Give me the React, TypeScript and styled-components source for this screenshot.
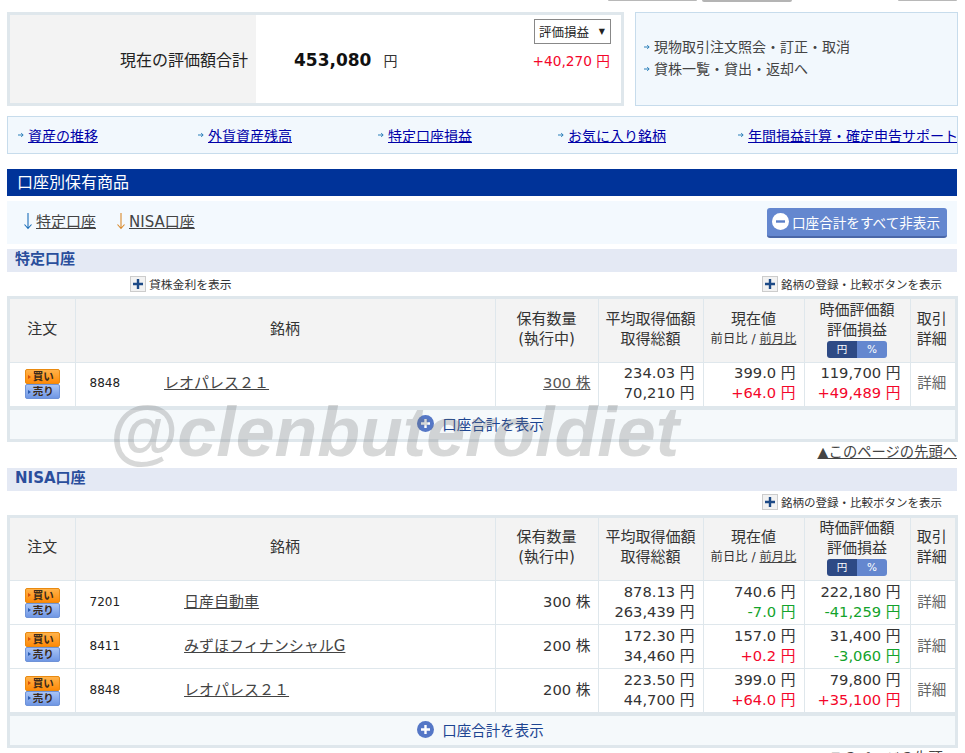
import React from 'react'
import styled, { createGlobalStyle } from 'styled-components'

const GlobalStyle = createGlobalStyle`
  html, body {
    margin: 0;
    padding: 0;
    background: #fff;
    overflow: hidden;
  }
  body {
    font-family: "DejaVu Sans", "Noto Sans CJK JP", sans-serif;
    color: #333;
  }
`

const Page = styled.div`
  position: relative;
  width: 965px;
  height: 753px;
  overflow: hidden;
  padding: 12px 7px 0;
  box-sizing: border-box;
`

const TopTabs = styled.div`
  position: absolute;
  top: 0;
  left: 0;
  width: 100%;
  height: 2px;
`

const TopTab = styled.span<{ $left: number; $width: number; $dark?: boolean }>`
  position: absolute;
  top: 0;
  left: ${p => p.$left}px;
  width: ${p => p.$width}px;
  height: ${p => (p.$dark ? 2 : 1)}px;
  border-radius: 0 0 2px 2px;
  background: ${p => (p.$dark ? '#b4b4b4' : '#b8b8b8')};
`

const Summary = styled.div`
  display: flex;
  gap: 11px;
  height: 94px;
`

const SummaryBox = styled.div`
  width: 617px;
  border: 3px solid #dfe7ec;
  box-sizing: border-box;
  display: flex;
`

const SummaryLabel = styled.div`
  width: 246px;
  background: #f3f3f3;
  display: flex;
  align-items: center;
  justify-content: flex-end;
  font-size: 16px;
  color: #222;
  box-sizing: border-box;
  padding-right: 8px;
`

const SummaryValue = styled.div`
  width: 146px;
  display: flex;
  align-items: center;
  padding-left: 38px;
  padding-top: 1px;
  font-size: 17px;
  font-weight: bold;
  color: #111;
`

const Yen = styled.span`
  font-size: 14px;
  font-weight: normal;
  margin-left: 12px;
  color: #333;
`

const SummarySide = styled.div`
  flex: 1;
  display: flex;
  flex-direction: column;
  align-items: flex-end;
  padding: 4px 10px 0 0;
`

const Select = styled.div`
  width: 77px;
  height: 25px;
  border: 1px solid #888;
  box-sizing: border-box;
  display: flex;
  align-items: center;
  justify-content: space-between;
  padding: 0 5px 0 4px;
  font-size: 12.5px;
  color: #222;
`

const Caret = styled.span`
  font-size: 8px;
  color: #222;
`

const Gain = styled.div`
  margin-top: 6px;
  margin-right: 1px;
  font-size: 13.7px;
  color: #f4062a;
`

const SideLinks = styled.div`
  flex: 1;
  border: 1px solid #c7dcec;
  background: #f2f8fd;
  display: flex;
  flex-direction: column;
  justify-content: center;
  gap: 3px;
  padding: 0 0 2px 8px;
  font-size: 14px;
  line-height: 19px;
  color: #444;
`

const LinkLine = styled.div`
  display: flex;
  align-items: center;
`

const ArrowIcon = styled.svg`
  flex: none;
  width: 6px;
  height: 6px;
  margin-right: 4px;
`

const LinkBar = styled.div`
  margin-top: 10px;
  height: 38px;
  width: 951px;
  border: 1px solid #c7dcec;
  background: #f2f8fd;
  box-sizing: border-box;
  display: flex;
  align-items: center;
  padding-left: 10px;
  overflow: hidden;
  white-space: nowrap;
  font-size: 14px;
`

const BarItem = styled.div`
  flex: 0 0 180px;
  display: flex;
  align-items: center;
`

const BarLink = styled.a`
  color: #0000a8;
  text-decoration: underline;
`

const SectionTitle = styled.div`
  margin-top: 15px;
  height: 27px;
  width: 950px;
  background: #003399;
  color: #fff;
  font-size: 16px;
  line-height: 27px;
  padding-left: 10px;
  box-sizing: border-box;
`

const AnchorRow = styled.div`
  margin-top: 5px;
  height: 43px;
  width: 950px;
  background: #f3f9fe;
  display: flex;
  align-items: center;
  justify-content: space-between;
  padding: 0 10px 0 16px;
  box-sizing: border-box;
  font-size: 15px;
`

const Anchors = styled.div`
  display: flex;
  gap: 20px;
  margin-bottom: 4px;
`

const Anchor = styled.a`
  color: #444;
  display: flex;
  align-items: center;
  text-decoration: underline;
`

const DownArrow = styled.svg`
  width: 10px;
  height: 18px;
  margin-right: 3px;
`

const CollapseButton = styled.div`
  width: 180px;
  height: 30px;
  border-radius: 3px;
  background: #6487cf;
  border-bottom: 2px solid #4a67a8;
  box-sizing: border-box;
  color: #fff;
  font-size: 13.6px;
  display: flex;
  align-items: center;
  padding-left: 5px;
  gap: 3px;
`

const AccountTitle = styled.div<{ $top: number }>`
  margin-top: ${p => p.$top}px;
  height: 23px;
  width: 950px;
  background: #e4e9f4;
  color: #2a4e9c;
  font-size: 15px;
  font-weight: bold;
  line-height: 21px;
  padding-left: 8px;
  box-sizing: border-box;
`

const OptionRow = styled.div`
  height: 24px;
  width: 950px;
  display: flex;
  align-items: center;
  justify-content: flex-end;
  padding: 0 15px 1px 123px;
  box-sizing: border-box;
  font-size: 11.5px;
  color: #333;
`

const Option = styled.div<{ $push?: boolean }>`
  display: flex;
  align-items: center;
  gap: 3px;
  margin-right: ${p => (p.$push ? 'auto' : '0')};
  font-size: ${p => (p.$push ? '11.8px' : '11.5px')};
`

const PlusBox = styled.svg`
  width: 16px;
  height: 16px;
`

const TableWrap = styled.div`
  width: 951px;
  border: 3px solid #dfe7ec;
  box-sizing: border-box;
`

const Table = styled.table`
  width: 945px;
  table-layout: fixed;
  border-collapse: collapse;
`

const Th = styled.th<{ $w: number }>`
  box-sizing: border-box;
  width: ${p => p.$w}px;
  height: 63px;
  padding: 0 0 3px;
  background: #f3f3f3;
  border: 1px solid #dfe7ec;
  border-top: 0;
  font-size: 15px;
  font-weight: normal;
  line-height: 20px;
  color: #333;
  text-align: center;
  vertical-align: middle;
  &:first-child { border-left: 0; }
  &:last-child { border-right: 0; padding-right: 2px; }
`

const HeaderSmall = styled.div`
  font-size: 12.3px;
  line-height: 20px;
`

const PlainLink = styled.a`
  color: #444;
  text-decoration: underline;
`

const Toggle = styled.div`
  display: flex;
  width: 60px;
  height: 17px;
  margin: 1px auto 0;
  border-radius: 3px;
  overflow: hidden;
  font-size: 10.5px;
  line-height: 17px;
  color: #fff;
`

const ToggleOn = styled.span`
  flex: 1;
  background: #2e4a85;
`

const ToggleOff = styled.span`
  flex: 1;
  background: #6487cf;
`

const Td = styled.td<{ $align?: string; $right?: number }>`
  height: 41px;
  padding: 0 ${p => p.$right || 0}px 2px 0;
  border: 1px solid #dfe7ec;
  text-align: ${p => p.$align || 'left'};
  font-size: 14.7px;
  line-height: 20px;
  color: #333;
  vertical-align: middle;
  white-space: nowrap;
  &:first-child { border-left: 0; padding-bottom: 0; }
  &:last-child { border-right: 0; }
`

const OrderButtons = styled.div`
  display: flex;
  flex-direction: column;
  align-items: center;
`

const OrderButton = styled.div<{ $kind: 'buy' | 'sell' }>`
  width: 35px;
  height: 15px;
  border-radius: 2px;
  box-sizing: border-box;
  border: 1px solid ${p => (p.$kind === 'buy' ? '#e98a10' : '#6f93d8')};
  background: ${p =>
    p.$kind === 'buy'
      ? 'linear-gradient(#ffb24a, #ff8a08)'
      : 'linear-gradient(#a9c4f5, #6f97e4)'};
  font-size: 10.5px;
  line-height: 13px;
  font-weight: bold;
  color: #3a2a1a;
  display: flex;
  justify-content: flex-end;
  align-items: center;
  padding-right: 5px;
  &::before {
    content: '';
    margin-right: 2px;
    border-left: 3px solid ${p => (p.$kind === 'buy' ? '#d8500a' : '#2a5cb0')};
    border-top: 2px solid transparent;
    border-bottom: 2px solid transparent;
  }
`

const StockRow = styled.div`
  display: flex;
  align-items: center;
  padding-left: 14px;
`

const Code = styled.span`
  font-size: 12px;
  color: #222;
`

const StockName = styled.a<{ $left: number }>`
  margin-left: ${p => p.$left}px;
  font-size: 15px;
  color: #444;
  text-decoration: underline;
`

const Quantity = styled.span<{ $link?: boolean }>`
  color: ${p => (p.$link ? '#555' : '#333')};
  text-decoration: ${p => (p.$link ? 'underline' : 'none')};
`

const Delta = styled.div<{ $sign: 'up' | 'down' }>`
  color: ${p => (p.$sign === 'up' ? '#f4062a' : '#13a32b')};
`

const DetailText = styled.span`
  color: #666;
  font-size: 14.5px;
  margin-right: 2px;
`

const TableFooter = styled.div`
  height: 32px;
  border-top: 3px solid #dfe7ec;
  background: #f5f9fb;
  display: flex;
  align-items: center;
  justify-content: center;
  gap: 8px;
  color: #1d4592;
  font-size: 14.5px;
  box-sizing: border-box;
  padding: 0 4px 2px 0;
`

const PageTop = styled.div`
  width: 950px;
  height: 20px;
  padding-bottom: 3px;
  box-sizing: border-box;
  display: flex;
  justify-content: flex-end;
  align-items: center;
  font-size: 14.3px;
  color: #444;
  text-decoration: underline;
`

const Watermark = styled.div`
  position: absolute;
  left: 109px;
  top: 392px;
  font-family: "Liberation Sans", sans-serif;
  font-size: 70px;
  line-height: 80px;
  font-weight: bold;
  font-style: italic;
  color: rgba(110, 115, 115, 0.28);
  pointer-events: none;
  white-space: nowrap;
`

type Stock = {
  code: string
  name: string
  nameLeft: number
  qty: string
  qtyLink?: boolean
  avg: string
  total: string
  price: string
  dayChange: string
  value: string
  profit: string
}

const tokuteiStocks: Stock[] = [
  { code: '8848', name: 'レオパレス２１', nameLeft: 44, qty: '300 株', qtyLink: true, avg: '234.03 円', total: '70,210 円', price: '399.0 円', dayChange: '+64.0 円', value: '119,700 円', profit: '+49,489 円' },
]

const nisaStocks: Stock[] = [
  { code: '7201', name: '日産自動車', nameLeft: 64, qty: '300 株', avg: '878.13 円', total: '263,439 円', price: '740.6 円', dayChange: '-7.0 円', value: '222,180 円', profit: '-41,259 円' },
  { code: '8411', name: 'みずほフィナンシャルG', nameLeft: 64, qty: '200 株', avg: '172.30 円', total: '34,460 円', price: '157.0 円', dayChange: '+0.2 円', value: '31,400 円', profit: '-3,060 円' },
  { code: '8848', name: 'レオパレス２１', nameLeft: 64, qty: '200 株', avg: '223.50 円', total: '44,700 円', price: '399.0 円', dayChange: '+64.0 円', value: '79,800 円', profit: '+35,100 円' },
]

const sign = (s: string) => (s.startsWith('+') ? 'up' : 'down')

const Arrow = () => (
  <ArrowIcon viewBox="0 0 6 6">
    <path d="M0 3h5M3.2 1.2L5.2 3 3.2 4.8" fill="none" stroke="#2a7fb8" strokeWidth="1" />
  </ArrowIcon>
)

const Plus = () => (
  <PlusBox viewBox="0 0 16 16">
    <rect x="0.5" y="0.5" width="15" height="15" fill="#f2f2f2" stroke="#ccc" />
    <path d="M8 3v10M3 8h10" stroke="#1d4a86" strokeWidth="2.4" />
  </PlusBox>
)

const Down = ({ color }: { color: string }) => (
  <DownArrow viewBox="0 0 10 18">
    <path d="M5 1v15M1.5 12.5L5 16.5l3.5-4" fill="none" stroke={color} strokeWidth="1.1" />
  </DownArrow>
)

const Round = ({ minus }: { minus?: boolean }) => (
  <svg width="17" height="17" viewBox="0 0 17 17">
    <circle cx="8.5" cy="8.5" r="8.5" fill={minus ? '#fff' : '#5577c6'} />
    <path d={minus ? 'M4 8.5h9' : 'M8.5 4v9M4 8.5h9'} stroke={minus ? '#5b7fc8' : '#fff'} strokeWidth="2.4" />
  </svg>
)

const StockTable = ({ stocks }: { stocks: Stock[] }) => (
  <Table>
    <thead>
      <tr>
        <Th $w={65}>注文</Th>
        <Th $w={420}>銘柄</Th>
        <Th $w={103}>保有数量<br />(執行中)</Th>
        <Th $w={105}>平均取得価額<br />取得総額</Th>
        <Th $w={101}>現在値<HeaderSmall>前日比 / <PlainLink>前月比</PlainLink></HeaderSmall></Th>
        <Th $w={106}>時価評価額<br />評価損益<Toggle><ToggleOn>円</ToggleOn><ToggleOff>%</ToggleOff></Toggle></Th>
        <Th $w={45}>取引<br />詳細</Th>
      </tr>
    </thead>
    <tbody>
      {stocks.map(s => (
        <tr key={s.code + s.qty}>
          <Td>
            <OrderButtons>
              <OrderButton $kind="buy">買い</OrderButton>
              <OrderButton $kind="sell">売り</OrderButton>
            </OrderButtons>
          </Td>
          <Td>
            <StockRow>
              <Code>{s.code}</Code>
              <StockName $left={s.nameLeft}>{s.name}</StockName>
            </StockRow>
          </Td>
          <Td $align="right" $right={7}><Quantity $link={s.qtyLink}>{s.qty}</Quantity></Td>
          <Td $align="right" $right={8}>{s.avg}<br />{s.total}</Td>
          <Td $align="right" $right={8}>{s.price}<Delta $sign={sign(s.dayChange)}>{s.dayChange}</Delta></Td>
          <Td $align="right" $right={9}>{s.value}<Delta $sign={sign(s.profit)}>{s.profit}</Delta></Td>
          <Td $align="center"><DetailText>詳細</DetailText></Td>
        </tr>
      ))}
    </tbody>
  </Table>
)

export default function App() {
  return (
    <Page>
      <GlobalStyle />
      <TopTabs>
        <TopTab $left={608} $width={89} />
        <TopTab $left={702} $width={90} $dark />
        <TopTab $left={898} $width={59} />
      </TopTabs>
      <Summary>
        <SummaryBox>
          <SummaryLabel>現在の評価額合計</SummaryLabel>
          <SummaryValue>453,080<Yen>円</Yen></SummaryValue>
          <SummarySide>
            <Select>評価損益<Caret>▼</Caret></Select>
            <Gain>+40,270 円</Gain>
          </SummarySide>
        </SummaryBox>
        <SideLinks>
          <LinkLine><Arrow />現物取引注文照会・訂正・取消</LinkLine>
          <LinkLine><Arrow />貸株一覧・貸出・返却へ</LinkLine>
        </SideLinks>
      </Summary>

      <LinkBar>
        <BarItem><Arrow /><BarLink>資産の推移</BarLink></BarItem>
        <BarItem><Arrow /><BarLink>外貨資産残高</BarLink></BarItem>
        <BarItem><Arrow /><BarLink>特定口座損益</BarLink></BarItem>
        <BarItem><Arrow /><BarLink>お気に入り銘柄</BarLink></BarItem>
        <BarItem><Arrow /><BarLink>年間損益計算・確定申告サポート</BarLink></BarItem>
      </LinkBar>

      <SectionTitle>口座別保有商品</SectionTitle>
      <AnchorRow>
        <Anchors>
          <Anchor><Down color="#1d6fb8" />特定口座</Anchor>
          <Anchor><Down color="#d98a2b" />NISA口座</Anchor>
        </Anchors>
        <CollapseButton><Round minus />口座合計をすべて非表示</CollapseButton>
      </AnchorRow>

      <AccountTitle $top={5}>特定口座</AccountTitle>
      <OptionRow>
        <Option $push><Plus />貸株金利を表示</Option>
        <Option><Plus />銘柄の登録・比較ボタンを表示</Option>
      </OptionRow>
      <TableWrap>
        <StockTable stocks={tokuteiStocks} />
        <TableFooter><Round />口座合計を表示</TableFooter>
      </TableWrap>
      <PageTop>▲このページの先頭へ</PageTop>

      <AccountTitle $top={6}>NISA口座</AccountTitle>
      <OptionRow>
        <Option><Plus />銘柄の登録・比較ボタンを表示</Option>
      </OptionRow>
      <TableWrap>
        <StockTable stocks={nisaStocks} />
        <TableFooter><Round />口座合計を表示</TableFooter>
      </TableWrap>
      <PageTop>▲このページの先頭へ</PageTop>

      <Watermark>@clenbuteroldiet</Watermark>
    </Page>
  )
}
